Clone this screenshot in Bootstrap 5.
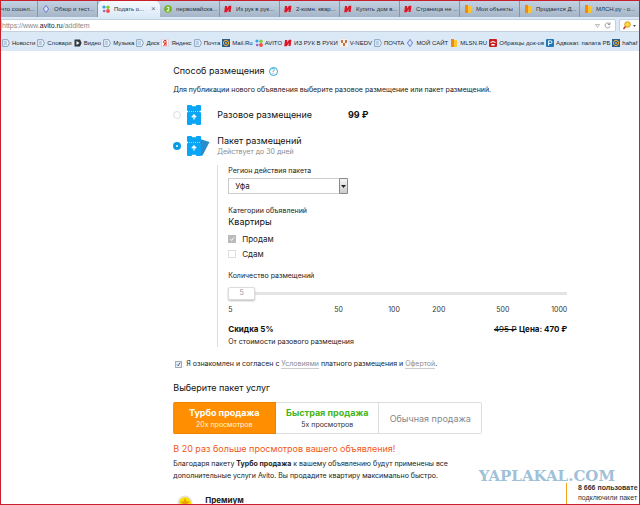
<!DOCTYPE html>
<html lang="ru">
<head>
<meta charset="utf-8">
<meta name="viewport" content="width=device-width, initial-scale=1">
<title>Подать объявление</title>
<link href="https://cdn.jsdelivr.net/npm/bootstrap@5.3.0/dist/css/bootstrap.min.css" rel="stylesheet">
<style>
body { font: 7px/10px Inter, "Liberation Sans", sans-serif; color: #222; background: #fff; }
svg { flex: none; display: block; }
.frame { border: 1px solid #c8202a; }
.chrome { font: 6px/8px "Liberation Sans", Arial, sans-serif; color: #1c2733; white-space: nowrap; }
.tabstrip { height: 16px; background: linear-gradient(#c3d2e2, #a5b5c7); }
.tab { width: 60px; flex: none; border-right: 1px solid #8496aa; color: #25313e; text-decoration: none; gap: 4px; padding-left: 4px; height: 16px; }
.tab-first { width: 37px; padding-left: 0; }
.tab-last { border: 0; }
.tab-active { background: linear-gradient(#f4f9fe, #dbe9f7); border: 0; border-radius: 5px 5px 0 0; width: 62px; }
.tab-close { font: 8px/8px "Liberation Sans", sans-serif; color: #667; border: 0; background: none; padding: 0; margin-left: 3px; }
.addressbar { height: 17px; background: #dbe9f7; gap: 3px; }
.address { flex: 1; background: #fff; border: 1px solid #c2cfdd; height: 13px; font-size: 7px; color: #888; border-radius: 0 2px 2px 0; padding-right: 4px; gap: 4px; }
.address b { color: #222; font-weight: 400; }
.search { width: 20px; height: 13px; background: #fff; border: 1px solid #c2cfdd; border-right: 0; border-radius: 2px 0 0 2px; padding-left: 3px; }
.bookmarks { height: 17px; background: #dbe9f7; padding-left: 1px; gap: 2px; }
.bookmarks a { color: #1c2733; text-decoration: none; gap: 2px; flex: none; }
.main-col { width: 394px; max-width: 100%; margin-left: 27%; padding-top: 14px; }
.heading { font-size: 9px; line-height: 12px; font-weight: 400; color: #111; margin: 0; }
.help { width: 9px; height: 9px; border: 1px solid #35a3cc; border-radius: 50%; color: #35a3cc; background: none; font-size: 7px; line-height: 7px; padding: 0; }
.intro { margin: 8px 0 0; }
.radio { appearance: none; width: 8px; height: 8px; border: 1px solid #ddd; border-radius: 50%; margin: 0; background: #fff; flex: none; }
.radio:checked { border: 3px solid #0a9be8; }
.option { gap: 6px; margin-top: 10px; }
.option-icon { width: 24px; }
.option-price { margin-left: 30px; }
.muted { color: #8c8c8c; }
.details { margin: 8px 0 0 44px; border-left: 1px solid #ddd; padding: 1px 0 0 10px; }
.region { appearance: none; width: 120px; height: 16px; border: 1px solid #ccc; border-radius: 0; background: #fff; font-size: 8px; line-height: 12px; padding: 0 6px; color: #222; display: block; }
.region-wrap { width: 120px; margin-top: 2px; }
.region-arrow { position: absolute; right: 0; top: 0; width: 9px; height: 16px; border: 1px solid #888; background: linear-gradient(#f5f5f5, #ccc); border-radius: 1px; pointer-events: none; }
.field-label { display: block; margin-top: 12px; }
.check { appearance: none; width: 8px; height: 8px; border: 1px solid #ddd; margin: 0; background: #fff; flex: none; }
.check:checked { background: #bbb url("data:image/svg+xml,%3Csvg xmlns='http://www.w3.org/2000/svg' viewBox='0 0 8 8'%3E%3Cpath d='M1.5 4l2 2 3-4' fill='none' stroke='%23fff' stroke-width='1.2'/%3E%3C/svg%3E"); border-color: #bbb; }
.check-agree:checked { background: #e6edf7 url("data:image/svg+xml,%3Csvg xmlns='http://www.w3.org/2000/svg' viewBox='0 0 8 8'%3E%3Cpath d='M1.5 4l2 2 3-5' fill='none' stroke='%23324a78' stroke-width='1.3'/%3E%3C/svg%3E"); border-color: #a3adba; width: 7px; height: 7px; }
.check-row { font-size: 8px; line-height: 10px; gap: 6px; margin-top: 6px; }
.check-row + .check-row { margin-top: 5px; }
.amount-wrap { margin-top: 5px; }
.amount { appearance: none; width: 100%; height: 14px; margin: 0; display: block; background: linear-gradient(#e4e4e4, #e4e4e4) center / 100% 3px no-repeat; }
.amount::-webkit-slider-thumb { appearance: none; width: 27px; height: 13px; background: #fff; border: 1px solid #ddd; border-radius: 2px; box-shadow: 0 1px 2px #bbb; }
.amount-value { position: absolute; left: 0; top: 2px; width: 27px; text-align: center; color: #999; pointer-events: none; }
.scale { display: grid; grid-template-columns: 106px 54px 44px 64px 1fr auto; color: #333; margin-top: 5px; }
.totals { font-size: 8px; color: #111; margin-top: 9px; }
.discount-note { margin-top: 3px; }
.agree { margin-top: 12px; padding-left: 2px; gap: 4px; }
.terms { color: #8c8c8c; text-decoration: none; border-bottom: 1px solid #ccc; }
.packs-title { margin-top: 13px; }
.packs { width: 309px; max-width: 100%; height: 32px; margin-top: 8px; }
.pack { flex: 1; border: 1px solid #ddd; border-left: 0; background: #fff; padding: 0; line-height: 11px; color: #333; }
.pack strong { display: block; font-size: 9px; line-height: 12px; color: #45b520; }
.pack-on { background: #ff8f00; border-color: #f08200; color: #fff3df; border-radius: 2px 0 0 2px; }
.pack-on strong { color: #fff; }
.pack-plain { color: #888; font-size: 9px; border-radius: 0 2px 2px 0; }
.promise { color: #f0591a; font-size: 9px; line-height: 12px; margin-top: 9px; }
.benefit { margin: 3px 0 0; line-height: 12px; }
.premium { margin-top: 13px; gap: 12px; padding-left: 4px; font-size: 8px; }
.watermark { position: absolute; right: 24px; bottom: 20px; font: bold 15px/16px "DejaVu Serif", serif; color: #9fc1d8; }
.notice { position: absolute; right: 0; bottom: 0; width: 73px; height: 21px; font-family: "Liberation Sans", Arial, sans-serif; border-left: 1px solid #f5a21b; padding-left: 11px; white-space: nowrap; color: #333; }
</style>
</head>
<body>
<svg width="0" height="0" class="position-absolute" aria-hidden="true">
  <symbol id="i-hand" viewBox="0 0 8 8"><path d="M1 1h2.2L3 3.6 5 .8h2.4L6.6 7H4.4l.5-3L2.7 7.2H.2z" fill="#e01525"/></symbol>
  <symbol id="i-dots" viewBox="0 0 8 8"><circle cx="2" cy="2" r="1.6" fill="#2da5e8"/><circle cx="6" cy="2.2" r="1.7" fill="#8acb2c"/><circle cx="2.2" cy="6" r="1.3" fill="#a05bd0"/><circle cx="6" cy="6" r="1.9" fill="#f2503c"/></symbol>
  <symbol id="i-gem" viewBox="0 0 8 8"><path d="M4 .3L6.7 4 4 7.7 1.3 4z" fill="#b9c2f2" stroke="#6576c8" stroke-width=".8"/><path d="M4 2v4M2.5 4h3" stroke="#fff" stroke-width=".7"/></symbol>
  <symbol id="i-bars" viewBox="0 0 8 8"><path d="M1 0h3v8H1z" fill="#f08a12"/><path d="M4 1h3v7H4z" fill="#ffc52e"/></symbol>
  <symbol id="i-page" viewBox="0 0 8 8"><path d="M.7.7h5L7.4 4 5.7 7.4h-5z" fill="#eef5fc" stroke="#6c8bb0" stroke-width=".8"/><path d="M2 3h3M2 5h3" stroke="#5a86bd" stroke-width=".7"/></symbol>
  <symbol id="i-play" viewBox="0 0 8 8"><path d="M.5.5h5.5L7.6 4 6 7.5H.5z" fill="#303840"/><path d="M2.5 2l3 2-3 2z" fill="#fff"/></symbol>
  <symbol id="i-ya" viewBox="0 0 8 8"><path d="M.7.4h6.6v7.2H.7z" fill="#fff" stroke="#d8b8b8" stroke-width=".6"/><path d="M5 7V1.5H4a1.4 1.4 0 0 0 0 2.8h1M4 4.3L2.7 7" fill="none" stroke="#e02020" stroke-width="1"/></symbol>
  <symbol id="i-mail" viewBox="0 0 8 8"><path d="M0 0h8v8H0z" fill="#2b5d8a"/><circle cx="4" cy="4" r="2.6" fill="none" stroke="#f0b13c"/><circle cx="4" cy="4" r="1" fill="#f0b13c"/></symbol>
  <symbol id="i-figs" viewBox="0 0 8 8"><path d="M0 0h8v8H0z" fill="#f7efe6"/><path d="M1 1h2v3H1zM5 1h2v3H5zM3 4h2v3H3z" fill="#c0764a"/></symbol>
  <symbol id="i-phone" viewBox="0 0 8 8"><rect width="8" height="8" rx="1" fill="#c81e1e"/><path d="M1 3.5q3-3 6 0l-1.3.6-.6-.8H2.9l-.6.8zM2.4 5h3.2v1.6H2.4z" fill="#fff"/></symbol>
  <symbol id="i-p" viewBox="0 0 8 8"><rect width="8" height="8" rx="1" fill="#1d78b5"/><path d="M2.6 6.6V1.8h2a1.3 1.3 0 0 1 0 2.7h-2" fill="none" stroke="#fff" stroke-width="1"/></symbol>
  <symbol id="i-two" viewBox="0 0 8 8"><circle cx="4" cy="4" r="3.8" fill="#6fb41f"/><path d="M2.6 3q1.3-1.6 2.4-.4T2.7 5.9h2.8" fill="none" stroke="#fff" stroke-width="1"/></symbol>
  <symbol id="i-ticket" viewBox="0 0 14 20"><path d="M1 0h3.500l.8 1.300h3.400L9.500 0H13a1 1 0 0 1 1 1v4.500a1 1 0 0 0 0 2V19a1 1 0 0 1-1 1H9.500l-.8-1.300H5.300L4.500 20H1a1 1 0 0 1-1-1V7.500a1 1 0 0 0 0-2V1a1 1 0 0 1 1-1z" fill="#0aa5f5"/><path d="M2 6.500h11" stroke="#b5e5ff" stroke-width=".8" stroke-dasharray="1 1"/><path d="M7 14.500V10M4.800 12.200L7 10l2.200 2.200" fill="none" stroke="#fff" stroke-width="1.300"/></symbol>
</svg>

<div class="frame vh-100 overflow-hidden position-relative d-flex flex-column">
  <header class="chrome flex-shrink-0">
    <nav class="tabstrip d-flex align-items-end overflow-hidden">
      <a href="#" class="tab tab-first d-flex align-items-center">что сошел...</a>
      <a href="#" class="tab d-flex align-items-center"><svg width="8" height="8"><use href="#i-gem"/></svg>Обзор и тест...</a>
      <div class="tab tab-active d-flex align-items-center"><svg width="8" height="8"><use href="#i-dots"/></svg>Подать о...<button class="tab-close" aria-label="Закрыть">×</button></div>
      <a href="#" class="tab d-flex align-items-center"><svg width="8" height="8"><use href="#i-two"/></svg>первомайска...</a>
      <a href="#" class="tab d-flex align-items-center"><svg width="8" height="8"><use href="#i-hand"/></svg>Из рук в рук...</a>
      <a href="#" class="tab d-flex align-items-center"><svg width="8" height="8"><use href="#i-hand"/></svg>2-комн. квар...</a>
      <a href="#" class="tab d-flex align-items-center"><svg width="8" height="8"><use href="#i-hand"/></svg>Купить дом в...</a>
      <a href="#" class="tab d-flex align-items-center"><svg width="8" height="8"><use href="#i-hand"/></svg>Страница не ...</a>
      <a href="#" class="tab d-flex align-items-center"><svg width="8" height="8"><use href="#i-bars"/></svg>Мои объекты</a>
      <a href="#" class="tab d-flex align-items-center"><svg width="8" height="8"><use href="#i-bars"/></svg>Продается Д...</a>
      <a href="#" class="tab tab-last d-flex align-items-center"><svg width="8" height="8"><use href="#i-bars"/></svg>МЛСН.ру - о...</a>
    </nav>
    <div class="addressbar d-flex align-items-center">
      <div class="address d-flex align-items-center"><span class="me-auto">https://www.<b>avito.ru</b>/additem</span>
        <svg width="5" height="4" viewBox="0 0 5 4"><path d="M.5.5h4l-2 3z" fill="none" stroke="#aaa" stroke-width=".8"/></svg>
        <svg width="7" height="7" viewBox="0 0 7 7"><path d="M5.700 2A2.500 2.500 0 1 0 6 4.300M6 .5v2H4" fill="none" stroke="#8a8f96" stroke-width=".9"/></svg>
      </div>
      <div class="search d-flex align-items-center"><svg width="14" height="9" viewBox="0 0 14 9"><circle cx="4.500" cy="3.500" r="2.800" fill="#ffd84a" stroke="#d99b16"/><path d="M2.500 5.500L.5 8" stroke="#c03020" stroke-width="1.300"/><path d="M10 4h3l-1.500 2z" fill="#555"/></svg></div>
    </div>
    <nav class="bookmarks d-flex align-items-center overflow-hidden">
      <a href="#" class="d-flex align-items-center"><svg width="8" height="8"><use href="#i-page"/></svg>Новости</a>
      <a href="#" class="d-flex align-items-center"><svg width="8" height="8"><use href="#i-page"/></svg>Словари</a>
      <a href="#" class="d-flex align-items-center"><svg width="8" height="8"><use href="#i-play"/></svg>Видео</a>
      <a href="#" class="d-flex align-items-center"><svg width="8" height="8"><use href="#i-page"/></svg>Музыка</a>
      <a href="#" class="d-flex align-items-center"><svg width="8" height="8"><use href="#i-page"/></svg>Диск</a>
      <a href="#" class="d-flex align-items-center"><svg width="8" height="8"><use href="#i-ya"/></svg>Яндекс</a>
      <a href="#" class="d-flex align-items-center"><svg width="8" height="8"><use href="#i-page"/></svg>Почта</a>
      <a href="#" class="d-flex align-items-center"><svg width="8" height="8"><use href="#i-mail"/></svg>Mail.Ru</a>
      <a href="#" class="d-flex align-items-center"><svg width="8" height="8"><use href="#i-dots"/></svg>AVITO</a>
      <a href="#" class="d-flex align-items-center"><svg width="8" height="8"><use href="#i-hand"/></svg>ИЗ РУК В РУКИ</a>
      <a href="#" class="d-flex align-items-center"><svg width="8" height="8"><use href="#i-figs"/></svg>V-NEDV</a>
      <a href="#" class="d-flex align-items-center"><svg width="8" height="8"><use href="#i-page"/></svg>ПОЧТА</a>
      <a href="#" class="d-flex align-items-center"><svg width="8" height="8"><use href="#i-gem"/></svg>МОЙ САЙТ</a>
      <a href="#" class="d-flex align-items-center"><svg width="8" height="8"><use href="#i-bars"/></svg>MLSN.RU</a>
      <a href="#" class="d-flex align-items-center"><svg width="8" height="8"><use href="#i-phone"/></svg>Образцы док-ов</a>
      <a href="#" class="d-flex align-items-center"><svg width="8" height="8"><use href="#i-p"/></svg>Адвокат. палата РБ</a>
      <a href="#" class="d-flex align-items-center"><svg width="8" height="8"><use href="#i-mail"/></svg>hahaf</a>
    </nav>
  </header>

  <main class="main-col">
    <div class="d-flex align-items-center gap-1"><h1 class="heading">Способ размещения</h1><button class="help" aria-label="Справка">?</button></div>
    <p class="intro">Для публикации нового объявления выберите разовое размещение или пакет размещений.</p>

    <div class="option d-flex align-items-center">
      <input class="radio" type="radio" name="way" id="single">
      <span class="option-icon"><svg width="14" height="20"><use href="#i-ticket"/></svg></span>
      <label for="single" class="heading">Разовое размещение</label>
      <b class="heading fw-bold option-price">99 ₽</b>
    </div>
    <div class="option d-flex align-items-center">
      <input class="radio" type="radio" name="way" id="pack" checked>
      <span class="option-icon"><svg width="24" height="21" viewBox="0 0 24 21"><path d="M13 3l9.500 3-7 13.500L12 20z" fill="#2a8cc8"/><use href="#i-ticket" width="14" height="20"/></svg></span>
      <label for="pack"><span class="heading d-block">Пакет размещений</span><span class="muted d-block">Действует до 30 дней</span></label>
    </div>

    <div class="details">
      <label for="region" class="d-block">Регион действия пакета</label>
      <div class="region-wrap position-relative">
        <select class="region" id="region"><option>Уфа</option></select>
        <span class="region-arrow d-flex align-items-center justify-content-center"><svg width="5" height="3" viewBox="0 0 5 3"><path d="M0 0h5L2.500 3z" fill="#222"/></svg></span>
      </div>
      <div class="field-label">Категории объявлений</div>
      <h2 class="heading">Квартиры</h2>
      <div class="check-row d-flex align-items-center"><input class="check" type="checkbox" id="sell" checked><label for="sell">Продам</label></div>
      <div class="check-row d-flex align-items-center"><input class="check" type="checkbox" id="rent"><label for="rent">Сдам</label></div>
      <label for="amount" class="field-label">Количество размещений</label>
      <div class="amount-wrap position-relative"><input class="amount" id="amount" type="range" min="5" max="1000" value="5"><span class="amount-value">5</span></div>
      <div class="scale"><span>5</span><span>50</span><span>100</span><span>200</span><span>500</span><span>1000</span></div>
      <div class="totals d-flex justify-content-between"><b>Скидка 5%</b><span><s>495 ₽</s> <b>Цена: 470 ₽</b></span></div>
      <div class="discount-note">От стоимости разового размещения</div>
    </div>

    <div class="agree d-flex align-items-center"><input class="check check-agree" type="checkbox" id="agree" checked><label for="agree">Я ознакомлен и согласен с <a class="terms" href="#">Условиями</a> платного размещения и <a class="terms" href="#">Офертой</a>.</label></div>

    <h2 class="heading packs-title">Выберите пакет услуг</h2>
    <div class="packs d-flex">
      <button class="pack pack-on"><strong>Турбо продажа</strong>20х просмотров</button>
      <button class="pack"><strong>Быстрая продажа</strong>5х просмотров</button>
      <button class="pack pack-plain">Обычная продажа</button>
    </div>
    <div class="promise">В 20 раз больше просмотров вашего объявления!</div>
    <p class="benefit">Благодаря пакету <b>Турбо продажа</b> к вашему объявлению будут применены все<br>дополнительные услуги Avito. Вы продадите квартиру максимально быстро.</p>
    <div class="premium d-flex">
      <svg width="16" height="16" viewBox="0 0 16 16"><circle cx="8" cy="8" r="7.500" fill="#e3e3e3"/><circle cx="8" cy="8" r="6" fill="#ffe100"/><path d="M8 3l1.500 3.500H13l-2.700 2.300 1 3.500L8 10.300 4.700 12.300l1-3.500L3 6.500h3.500z" fill="#e8a000"/></svg>
      <b>Премиум</b>
    </div>
  </main>

  <div class="watermark">YAPLAKAL.COM</div>
  <aside class="notice"><b>8 666 пользовате</b><br>подключили пакет</aside>
</div>
<script src="https://cdn.jsdelivr.net/npm/bootstrap@5.3.0/dist/js/bootstrap.bundle.min.js"></script>
</body>
</html>
